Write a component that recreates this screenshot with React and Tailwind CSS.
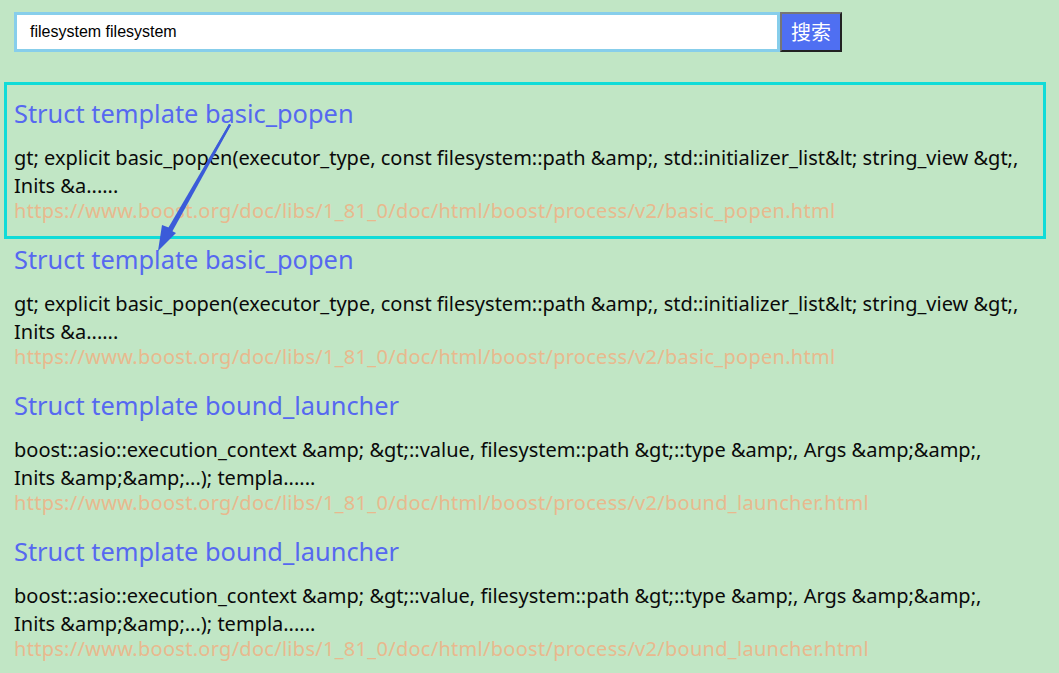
import React from "react";

const items = [
  {
    title: "Struct template basic_popen",
    body: "gt; explicit basic_popen(executor_type, const filesystem::path &amp;, std::initializer_list&lt; string_view &gt;, Inits &a......",
    url: "https://www.boost.org/doc/libs/1_81_0/doc/html/boost/process/v2/basic_popen.html",
  },
  {
    title: "Struct template basic_popen",
    body: "gt; explicit basic_popen(executor_type, const filesystem::path &amp;, std::initializer_list&lt; string_view &gt;, Inits &a......",
    url: "https://www.boost.org/doc/libs/1_81_0/doc/html/boost/process/v2/basic_popen.html",
  },
  {
    title: "Struct template bound_launcher",
    body: "boost::asio::execution_context &amp; &gt;::value, filesystem::path &gt;::type &amp;, Args &amp;&amp;, Inits &amp;&amp;...); templa......",
    url: "https://www.boost.org/doc/libs/1_81_0/doc/html/boost/process/v2/bound_launcher.html",
  },
  {
    title: "Struct template bound_launcher",
    body: "boost::asio::execution_context &amp; &gt;::value, filesystem::path &gt;::type &amp;, Args &amp;&amp;, Inits &amp;&amp;...); templa......",
    url: "https://www.boost.org/doc/libs/1_81_0/doc/html/boost/process/v2/bound_launcher.html",
  },
];

export default function App() {
  return (
    <div
      className="relative w-[1059px] h-[673px] overflow-hidden bg-[#c1e6c5] px-[14px] pt-[12px]"
      style={{ fontFamily: '"Noto Sans", "Open Sans", sans-serif' }}
    >
      <div className="flex">
        <div className="w-[766px] h-[40px] bg-white border-[3px] border-[#87ceeb] flex items-center pl-[13px]">
          <span
            className="text-[16px] text-black"
            style={{ fontFamily: '"Liberation Sans", Arial, sans-serif' }}
          >
            filesystem filesystem
          </span>
        </div>
        <button
          className="w-[62px] h-[40px] bg-[#4f6ff2] text-white text-[20px] border-2 border-t-[#767676] border-l-[#767676] border-r-[#222] border-b-[#222] flex items-center justify-center"
          style={{ fontFamily: '"Noto Sans CJK SC", sans-serif' }}
        >
          搜索
        </button>
      </div>

      <div className="mt-[43px] flex flex-col gap-[19px] w-[1010px]">
        {items.map((it, i) => (
          <div key={i} className="flex flex-col">
            <div className="text-[25.4px] leading-[36px] text-[#5668f0]">{it.title}</div>
            <div className="mt-[13px] text-[20px] leading-[28px] text-[#0a0a0a]">{it.body}</div>
            <div className="text-[20px] leading-[22px] tracking-[0.28px] text-[#e8b98e]">{it.url}</div>
          </div>
        ))}
      </div>

      <div className="absolute left-[4px] top-[82px] w-[1042px] h-[157px] border-[3px] border-[#10dcd8] pointer-events-none" />

      <svg className="absolute left-0 top-0 pointer-events-none" width="1059" height="673">
        <polygon points="231,125 229,124 170,228 162,225 158,251 176,233 170,230" fill="#3b5bd9" />
        <polygon points="231,125 229,124 167,230 172,232" fill="#3b5bd9" />
      </svg>
    </div>
  );
}
